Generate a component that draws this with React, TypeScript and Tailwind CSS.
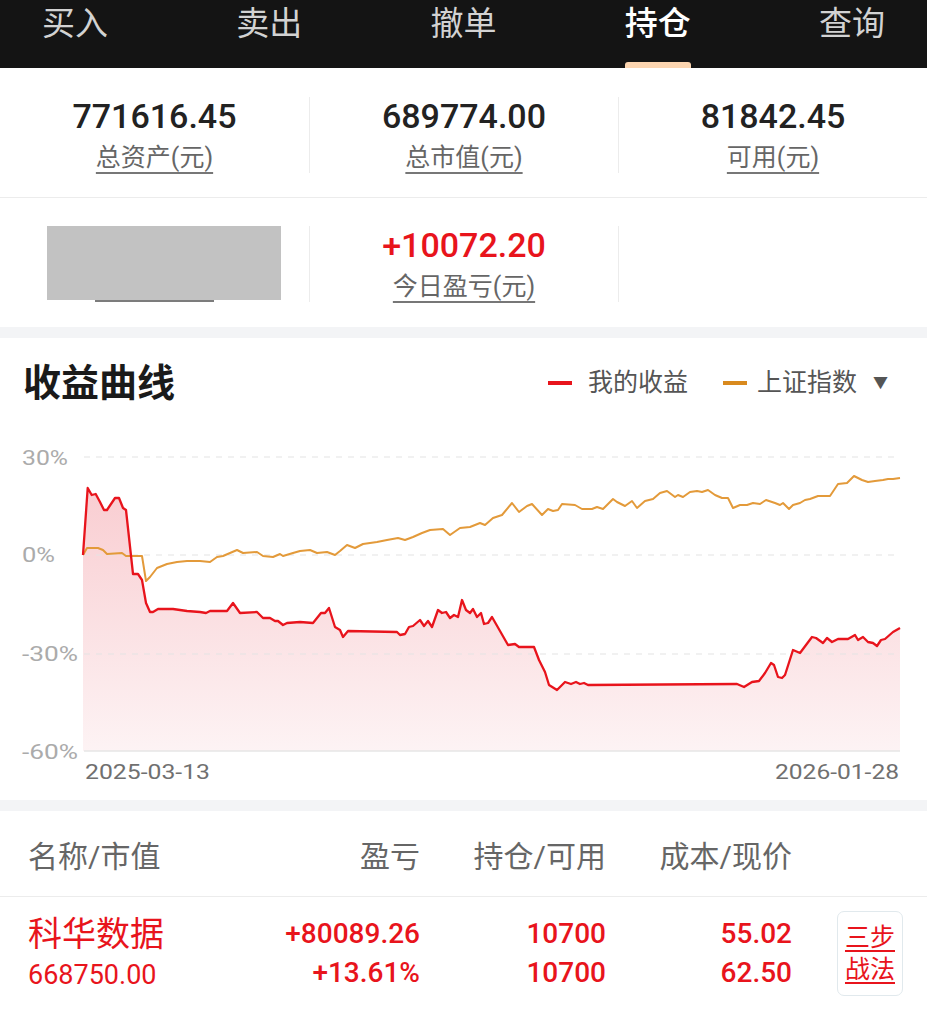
import React from "react";

const tabs = ["买入", "卖出", "撤单", "持仓", "查询"];

// curve points traced in page pixels (chart svg uses the same coords)
const mine: [number, number][] = [
  [83, 555], [87.7, 488], [91.7, 495], [95.7, 494], [100, 502], [104, 510], [107, 510], [115, 498],
  [119, 498], [123, 508], [126, 510], [133, 574], [138, 574], [142, 580], [146, 603], [150, 612],
  [153, 612], [158, 609], [173, 609], [187, 611], [200, 612], [206, 613], [210, 611], [227, 611],
  [233, 603], [240, 613], [257, 612], [263, 618], [270, 618], [275, 621], [278, 621], [283, 625],
  [287, 623], [300, 622], [313, 623], [321, 613], [325, 613], [329, 608], [335, 627], [340, 630],
  [343, 637], [348, 631], [397, 632], [400, 635], [405, 634], [409, 627], [413, 626], [420, 620],
  [424, 626], [428, 621], [432, 627], [438, 610], [442, 613], [446, 612], [450, 618], [454, 615],
  [458, 617], [462, 600], [466, 610], [470, 613], [473, 609], [477, 617], [481, 613], [484, 624],
  [488, 623], [492, 617], [508, 645], [515, 644], [519, 647], [534, 647], [539, 660], [545, 672],
  [549, 685], [557, 690], [565, 682], [571, 684], [576, 682], [580, 684], [584, 683], [588, 685],
  [737, 684], [744, 687], [752, 682], [759, 681], [765, 673], [771, 663], [774, 665], [778, 677],
  [782, 678], [785, 675], [793, 650], [800, 653], [812, 637], [816, 638], [823, 643], [827, 638],
  [832, 642], [838, 639], [848, 639], [855, 635], [858, 640], [863, 637], [868, 642], [873, 643],
  [877, 646], [881, 640], [885, 639], [893, 632], [900, 628],
];

const index: [number, number][] = [
  [83, 555], [87, 548], [98, 548], [103, 550], [107, 554], [122, 553], [126, 556], [142, 556],
  [146, 581], [150, 577], [157, 568], [167, 564], [177, 562], [187, 561], [200, 561], [210, 562],
  [217, 557], [223, 556], [230, 553], [237, 550], [243, 553], [257, 552], [263, 556], [273, 557],
  [280, 554], [283, 556], [293, 553], [300, 551], [310, 550], [317, 553], [327, 552], [335, 555],
  [340, 551], [347, 545], [355, 548], [363, 544], [377, 542], [387, 540], [398, 538], [405, 540],
  [413, 537], [422, 533], [430, 530], [443, 529], [450, 535], [460, 528], [470, 527], [480, 523],
  [485, 525], [493, 518], [502, 515], [512, 503], [519, 512], [527, 506], [532, 504], [542, 515],
  [548, 509], [553, 511], [558, 510], [562, 504], [575, 505], [582, 509], [592, 509], [597, 507],
  [603, 509], [613, 499], [617, 502], [625, 506], [632, 501], [637, 508], [645, 501], [653, 499],
  [660, 493], [667, 491], [675, 497], [678, 495], [683, 497], [690, 492], [697, 491], [702, 492],
  [708, 490], [715, 495], [722, 498], [728, 498], [733, 508], [740, 505], [747, 505], [753, 503],
  [760, 504], [766, 500], [775, 503], [780, 505], [783, 503], [789, 509], [793, 505], [800, 503],
  [805, 500], [810, 499], [818, 496], [830, 496], [838, 484], [847, 483], [854, 476], [862, 480],
  [868, 482], [875, 481], [883, 480], [888, 479], [893, 479], [900, 478],
];

const toPath = (pts: [number, number][]) =>
  pts.map(([x, y], i) => `${i ? "L" : "M"}${x} ${y}`).join(" ");

const Stat = ({ value, label, red, first }: { value: string; label: string; red?: boolean; first?: boolean }) => (
  <div className={`flex h-[76px] flex-col items-center ${first ? "" : "border-l border-[#ececec]"}`}>
    <div className={`text-[34px] font-medium leading-[38px] ${red ? "text-[#e8141c]" : "text-[#222]"}`}>{value}</div>
    <div className="mt-[8px] text-[25px] leading-[30px] text-[#666] underline decoration-[#777] decoration-2 underline-offset-[6px]">
      {label}
    </div>
  </div>
);

const Chart = () => (
  <svg width={927} height={372} viewBox="0 428 927 372" className="block">
    <defs>
      <linearGradient id="fillMine" x1="0" y1="488" x2="0" y2="751" gradientUnits="userSpaceOnUse">
        <stop offset="0" stopColor="#f9cdd1" />
        <stop offset="1" stopColor="#fdf3f4" />
      </linearGradient>
    </defs>
    <path d={`${toPath(mine)} L900 751 L83 751 Z`} fill="url(#fillMine)" />
    {[457, 555, 654].map((y) => (
      <line key={y} x1={84} x2={900} y1={y} y2={y} stroke="#e4e4e4" strokeWidth={1.2} strokeDasharray="6 6" />
    ))}
    <line x1={84} x2={900} y1={751} y2={751} stroke="#e6e6e6" strokeWidth={1.5} />
    <path d={toPath(index)} fill="none" stroke="#e39a3a" strokeWidth={2} strokeLinejoin="round" />
    <path d={toPath(mine)} fill="none" stroke="#e8141c" strokeWidth={2.3} strokeLinejoin="round" />
    <g fill="#ababab" fontSize={21} fontFamily="Roboto, sans-serif">
      <text x={22} y={465} textLength={46} lengthAdjust="spacingAndGlyphs">30%</text>
      <text x={22} y={562} textLength={33} lengthAdjust="spacingAndGlyphs">0%</text>
      <text x={22} y={661} textLength={56} lengthAdjust="spacingAndGlyphs">-30%</text>
      <text x={22} y={759} textLength={56} lengthAdjust="spacingAndGlyphs">-60%</text>
    </g>
    <g fill="#707070" fontSize={21} fontFamily="Roboto, sans-serif">
      <text x={85} y={779} textLength={125} lengthAdjust="spacingAndGlyphs">2025-03-13</text>
      <text x={775} y={779} textLength={124} lengthAdjust="spacingAndGlyphs">2026-01-28</text>
    </g>
  </svg>
);

export default function App() {
  return (
    <div className="w-[927px] h-[1024px] overflow-hidden bg-white font-['Roboto','Noto_Sans_CJK_SC',sans-serif]">
      {/* tab bar */}
      <div className="flex h-[68px] justify-between bg-[#141414] px-[42px]">
        {tabs.map((t) => {
          const active = t === "持仓";
          return (
            <div key={t} className="relative h-[68px]">
              <div className={`text-[33px] leading-[48px] ${active ? "text-white font-medium" : "text-[#d2d2d2]"}`}>{t}</div>
              {active && <div className="absolute bottom-0 left-0 right-0 h-[6px] rounded-t-[3px] bg-[#fcd5b0]" />}
            </div>
          );
        })}
      </div>

      {/* account summary */}
      <div className="grid h-[130px] grid-cols-3 items-start border-b border-[#ececec] pt-[29px]">
        <Stat first value="771616.45" label="总资产(元)" />
        <Stat value="689774.00" label="总市值(元)" />
        <Stat value="81842.45" label="可用(元)" />
      </div>
      <div className="grid h-[129px] grid-cols-3 items-start pt-[28px]">
        <div className="flex flex-col pl-[47px]">
          <div className="h-[74px] w-[234px] bg-[#c2c2c2]" />
          <div className="ml-[48px] h-[2px] w-[119px] bg-[#7c7c7c]" />
        </div>
        <Stat red value="+10072.20" label="今日盈亏(元)" />
        <div className="h-[76px] border-l border-[#ececec]" />
      </div>
      <div className="h-[11px] bg-[#f3f4f6]" />

      {/* curve */}
      <div className="flex h-[90px] items-center justify-between pl-[23px] pr-[39px]">
        <div className="text-[38px] font-bold text-[#1a1a1a]">收益曲线</div>
        <div className="flex items-center text-[25px] text-[#555]">
          <span className="h-[4px] w-[24px] bg-[#e8141c]" />
          <span className="ml-[16px]">我的收益</span>
          <span className="ml-[35px] h-[4px] w-[24px] bg-[#d98a1e]" />
          <span className="ml-[10px]">上证指数</span>
          <span className="ml-[16px] text-[15px] text-[#555]">▼</span>
        </div>
      </div>
      <Chart />
      <div className="h-[11px] bg-[#f3f4f6]" />

      {/* holdings */}
      <div className="grid h-[86px] grid-cols-[252px_140px_186px_186px_1fr] items-center border-b border-[#ececec] pl-[28px] pt-[6px] text-[30px] text-[#666]">
        <div>名称/市值</div>
        <div className="text-right">盈亏</div>
        <div className="text-right">持仓/可用</div>
        <div className="text-right">成本/现价</div>
        <div />
      </div>
      <div className="grid grid-cols-[252px_140px_186px_186px_1fr] items-start pl-[28px] pt-[14px] text-[#e8141c]">
        <div className="mt-[4px] flex flex-col">
          <div className="text-[34px] leading-[38px]">科华数据</div>
          <div className="text-[27px] leading-[44px]">668750.00</div>
        </div>
        <div className="mt-[4px] flex flex-col items-end text-[28px] font-medium">
          <div className="leading-[38px]">+80089.26</div>
          <div className="leading-[40px]">+13.61%</div>
        </div>
        <div className="mt-[4px] flex flex-col items-end text-[28px] font-medium">
          <div className="leading-[38px]">10700</div>
          <div className="leading-[40px]">10700</div>
        </div>
        <div className="mt-[4px] flex flex-col items-end text-[28px] font-medium">
          <div className="leading-[38px]">55.02</div>
          <div className="leading-[40px]">62.50</div>
        </div>
        <div className="pl-[45px]">
          <div className="flex h-[85px] w-[66px] flex-col items-center justify-center rounded-[7px] border-[1.5px] border-[#e1e9ed] text-[25px] leading-[32px] underline decoration-2 underline-offset-[4px]">
            <span>三步</span>
            <span>战法</span>
          </div>
        </div>
      </div>
    </div>
  );
}
